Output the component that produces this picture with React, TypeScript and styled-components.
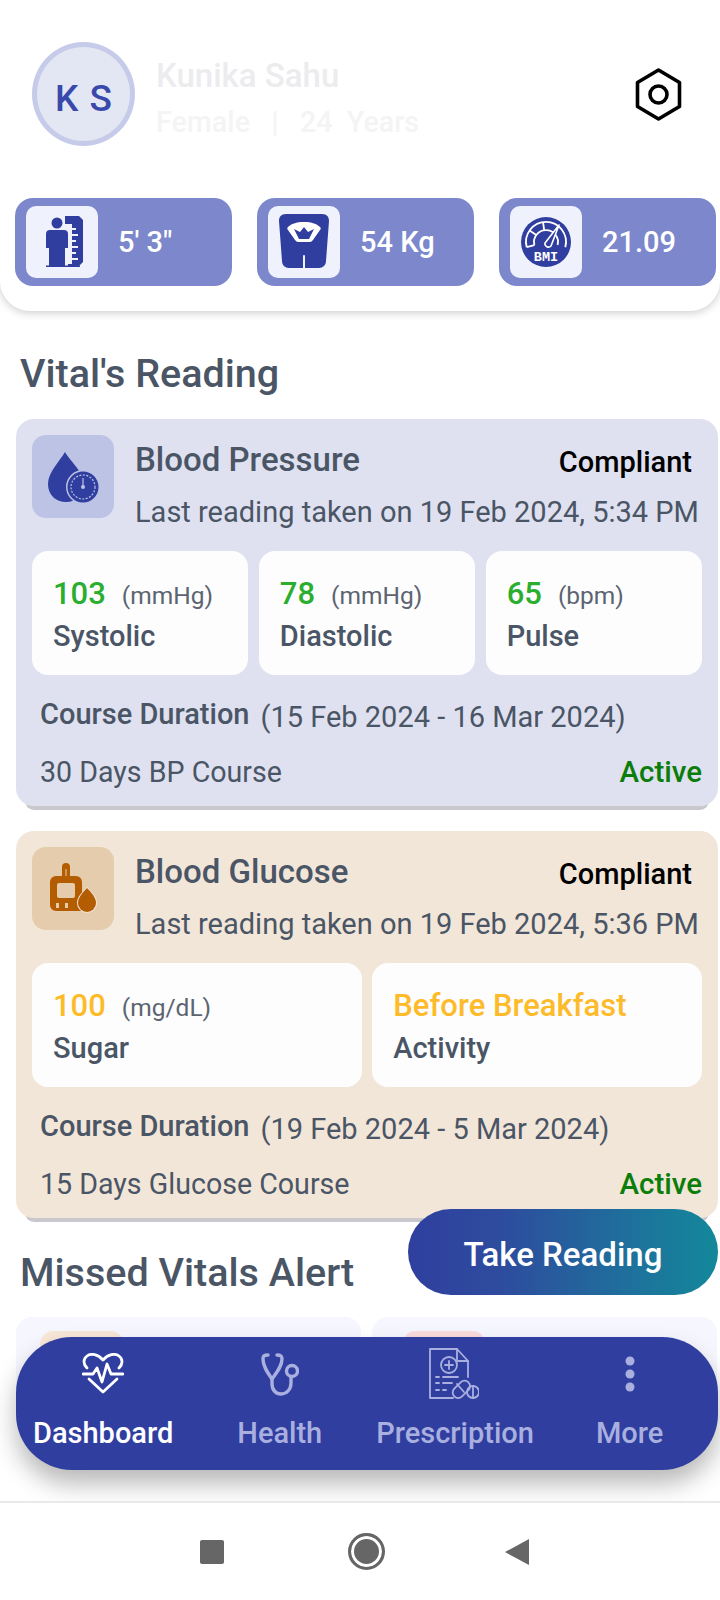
import React from "react";
import styled, { createGlobalStyle } from "styled-components";

const GlobalStyle = createGlobalStyle`
  html, body {
    margin: 0;
    padding: 0;
    background: #fff;
  }
  * {
    box-sizing: border-box;
  }
`;

const Screen = styled.div`
  width: 720px;
  height: 1600px;
  display: flex;
  flex-direction: column;
  overflow: hidden;
  background: #fff;
  font-family: Roboto, "Liberation Sans", sans-serif;
  color: #4a5565;
`;

const Content = styled.div`
  position: relative;
  flex: 1;
  overflow: hidden;
`;

const Header = styled.header`
  height: 311px;
  padding: 42px 0 0;
  background: #fff;
  border-radius: 0 0 30px 30px;
  box-shadow: 0 2px 8px rgba(0, 0, 0, 0.2);
`;

const Profile = styled.div`
  display: flex;
  align-items: center;
  padding: 0 38px 0 32px;
`;

const Avatar = styled.div`
  width: 103px;
  height: 104px;
  border-radius: 50%;
  flex: none;
  display: flex;
  align-items: center;
  justify-content: center;
  padding-top: 8px;
  background: #e3e6f3;
  border: 5px solid #c6cbe9;
  color: #3949ab;
  font-size: 37px;
  font-weight: 500;
  word-spacing: 2px;
`;

const ProfileText = styled.div`
  flex: 1;
  margin-left: 21px;
  padding-top: 10px;
`;

const Name = styled.div`
  font-size: 33px;
  line-height: 40px;
  font-weight: 500;
  color: #ececee;
`;

const Meta = styled.div`
  margin-top: 6px;
  font-size: 28.7px;
  line-height: 40px;
  font-weight: 500;
  color: #f4f4f5;
  white-space: pre;
`;

const StatRow = styled.div`
  display: flex;
  gap: 25px;
  margin-top: 52px;
  padding-left: 15px;
`;

const StatPill = styled.div`
  width: 217px;
  height: 88px;
  display: flex;
  align-items: center;
  gap: 20px;
  padding-left: 11px;
  border-radius: 18px;
  background: #7c87cc;
  color: #fff;
  font-size: 29px;
  font-weight: 500;
`;

const StatIcon = styled.div`
  width: 72px;
  height: 72px;
  flex: none;
  border-radius: 10px;
  background: #eff2fd;
  svg {
    display: block;
  }
`;

const SectionTitle = styled.h2<{ $top: number }>`
  margin: ${(p) => p.$top}px 0 0 20px;
  font-size: 39.5px;
  line-height: 44px;
  font-weight: 500;
  color: #4a5565;
`;

const Card = styled.section<{ $bg: string; $top: number }>`
  width: 702px;
  height: 387px;
  margin: ${(p) => p.$top}px 0 0 16px;
  padding: 16px 16px 0;
  border-radius: 18px;
  background: ${(p) => p.$bg};
  box-shadow: 0 13px 0 -9px #c9c9cd;
`;

const CardHead = styled.div`
  display: flex;
  gap: 21px;
`;

const IconTile = styled.div<{ $bg: string }>`
  width: 82px;
  height: 83px;
  flex: none;
  border-radius: 14px;
  background: ${(p) => p.$bg};
  svg {
    display: block;
  }
`;

const HeadText = styled.div`
  flex: 1;
  min-width: 0;
  padding-top: 4px;
`;

const TitleRow = styled.div`
  display: flex;
  justify-content: space-between;
  align-items: center;
  height: 40px;
  padding-right: 10px;
`;

const CardTitle = styled.div`
  font-size: 33px;
  font-weight: 500;
  color: #4a5565;
`;

const Compliant = styled.div`
  font-size: 29px;
  font-weight: 500;
  color: #000;
  padding-top: 6px;
`;

const LastReading = styled.div`
  margin-top: 13px;
  font-size: 29px;
  line-height: 40px;
  white-space: nowrap;
  color: #4a5565;
`;

const Cells = styled.div<{ $count: number }>`
  display: grid;
  grid-template-columns: repeat(${(p) => p.$count}, 1fr);
  gap: 10.5px;
  margin-top: 19px;
`;

const Cell = styled.div`
  height: 124px;
  padding: 25px 0 0 21px;
  border-radius: 16px;
  background: #fdfdfe;
`;

const ValueLine = styled.div`
  display: flex;
  align-items: baseline;
  gap: 16px;
  height: 36px;
  line-height: 36px;
`;

const Value = styled.span<{ $color: string }>`
  font-size: 31px;
  font-weight: 500;
  color: ${(p) => p.$color};
`;

const Unit = styled.span`
  font-size: 24.5px;
  color: #5b6470;
`;

const CellLabel = styled.div`
  margin-top: 6px;
  font-size: 29px;
  line-height: 36px;
  font-weight: 500;
  color: #4a5565;
`;

const CourseLine = styled.div`
  display: flex;
  align-items: center;
  gap: 11px;
  height: 36px;
  margin-top: 21px;
  padding-left: 8px;
`;

const CourseLabel = styled.span`
  font-size: 29px;
  font-weight: 500;
`;

const CourseDates = styled.span`
  font-size: 29px;
  padding-top: 6px;
`;

const FootLine = styled.div`
  display: flex;
  justify-content: space-between;
  align-items: center;
  height: 36px;
  margin-top: 22px;
  padding-left: 8px;
  font-size: 28.6px;
`;

const ActiveTag = styled.span`
  font-size: 29.5px;
  font-weight: 500;
  color: #0a7d0a;
`;

const MissedRow = styled.div`
  display: grid;
  grid-template-columns: 345px 345px;
  gap: 11px;
  margin: 22px 0 0 16px;
`;

const MissedCard = styled.div`
  height: 100px;
  padding: 14px 0 0 24px;
  border-radius: 16px;
  background: #f5f6fe;
`;

const MissedTile = styled.div<{ $bg: string; $shift: number }>`
  width: 84px;
  height: 84px;
  margin-left: ${(p) => p.$shift}px;
  border-radius: 14px;
  background: ${(p) => p.$bg};
`;

const TakeReading = styled.button`
  position: absolute;
  left: 408px;
  top: 1209px;
  width: 310px;
  height: 86px;
  border: none;
  border-radius: 43px;
  padding: 4px 0 0;
  background: linear-gradient(90deg, #2f3f9e 0%, #2e4c9e 30%, #1f6f9c 70%, #13889a 100%);
  color: #fff;
  font-family: inherit;
  font-size: 33px;
  font-weight: 500;
`;

const BottomNav = styled.nav`
  position: absolute;
  left: 16px;
  top: 1337px;
  width: 702px;
  height: 133px;
  display: flex;
  padding-left: 17px;
  border-radius: 56px;
  background: #303e9f;
  box-shadow: 0 14px 24px rgba(0, 0, 0, 0.28);
`;

const NavItem = styled.div<{ $active?: boolean; $gap?: number }>`
  display: flex;
  flex-direction: column;
  align-items: center;
  margin-left: ${(p) => p.$gap ?? 0}px;
  color: ${(p) => (p.$active ? "#fff" : "#a9b0e0")};
  font-size: 29px;
  font-weight: 500;
  white-space: nowrap;
`;

const NavGlyph = styled.div<{ $top: number; $pull?: number }>`
  height: 78px;
  padding-top: ${(p) => p.$top}px;
  padding-right: ${(p) => p.$pull ?? 0}px;
  svg {
    display: block;
  }
`;

const NavLabel = styled.div`
  line-height: 36px;
`;

const SystemBar = styled.div`
  height: 99px;
  flex: none;
  display: flex;
  justify-content: center;
  align-items: center;
  gap: 124px;
  padding-left: 9px;
  background: #fff;
  border-top: 2px solid #e9e9eb;
`;

const SystemSquare = styled.div`
  width: 24px;
  height: 24px;
  border-radius: 2px;
  background: #666;
`;

const SystemCircle = styled.div`
  width: 37px;
  height: 37px;
  margin-right: -4px;
  border-radius: 50%;
  background: #666;
  border: 3px solid #666;
  box-shadow: inset 0 0 0 3px #fff;
`;

const NUT = "M23.5 2 L44.5 14.5 V38.5 L23.5 51 L2.5 38.5 V14.5 Z";

const HeightIcon = () => (
  <svg width="72" height="72" viewBox="0 0 72 72">
    <circle cx="31" cy="17" r="5.5" fill="#303e9f" />
    <path d="M24 24h14a4 4 0 0 1 4 4v14h-3v18h-16V42h-3V28a4 4 0 0 1 4-4z" fill="#303e9f" />
    <path
      d="M39 10h14l4 4v42l-4 4H42v-2h4v-4h6v-2h-6v-4h4v-2h-4v-4h6v-2h-6v-4h4v-2h-4v-4h6v-2h-6v-4h4v-2h-4v-4h-7z"
      fill="#303e9f"
    />
    <rect x="20" y="59.5" width="34" height="1.5" fill="#303e9f" />
  </svg>
);

const ScaleIcon = () => (
  <svg width="72" height="72" viewBox="0 0 72 72">
    <path
      d="M18 8h36c5 0 7 3 7 7l-3 40c0 4-3 7-7 7H37V50a1 1 0 0 0-2 0v12H21c-4 0-7-3-7-7l-3-40c0-4 2-7 7-7z"
      fill="#303e9f"
    />
    <path
      d="M36 16c8 0 13 2 16 5 1 1 1 2 0 3l-7 10c-1 1-2 2-3 2H30c-1 0-2-1-3-2l-7-10c-1-1-1-2 0-3 3-3 8-5 16-5z"
      fill="#fff"
    />
    <path d="M26 23l5 10h10l5-10-6 3-4-5-4 5z" fill="#303e9f" />
  </svg>
);

const BmiIcon = () => (
  <svg width="72" height="72" viewBox="0 0 72 72">
    <circle cx="36" cy="36" r="25" fill="#303e9f" />
    <g fill="none" stroke="#fff" strokeWidth="1.8" strokeLinejoin="round">
      <path d="M16.700 41.200A20 20 0 1 1 55.300 41.200" />
      <path d="M24.400 39.100A12 12 0 1 1 47.600 39.100" />
      <path d="M16.700 41.200L24.400 39.100M19.600 24.500L26.200 29.100M33 16.200L34.200 24.100" />
    </g>
    <path d="M49 19L41 40a3.500 3.500 0 0 1-6-3z" fill="#303e9f" stroke="#fff" strokeWidth="1.6" strokeLinejoin="round" />
    <text x="36" y="55" textAnchor="middle" fill="#fff" fontFamily="Liberation Mono, monospace" fontSize="13.5" fontWeight="700">
      BMI
    </text>
  </svg>
);

const PressureIcon = () => (
  <svg width="82" height="83" viewBox="0 0 82 83">
    <path d="M33 17c5 9 19 20 19 33 0 10-8 17-18 17S16 60 16 49c0-12 12-23 17-32z" fill="#303e9f" />
    <circle cx="51" cy="52" r="17" fill="#bcc3e4" />
    <circle cx="51" cy="52" r="15.5" fill="#303e9f" />
    <circle cx="51" cy="52" r="12" fill="none" stroke="#bcc3e4" strokeWidth="1.2" strokeDasharray="2 1.5" />
    <path d="M51 43v9" stroke="#bcc3e4" strokeWidth="1.2" />
    <circle cx="51" cy="52" r="2" fill="#bcc3e4" />
  </svg>
);

const GlucoseIcon = () => (
  <svg width="82" height="83" viewBox="0 0 82 83">
    <path d="M30 29V20a4 4 0 0 1 8 0v9z" fill="#b35c00" />
    <rect x="33.500" y="22" width="1" height="7" fill="#e5ccac" />
    <path
      fillRule="evenodd"
      d="M24 29h20a6 6 0 0 1 6 6v29H24a6 6 0 0 1-6-6V35a6 6 0 0 1 6-6zm3 7a2 2 0 0 0-2 2v11a2 2 0 0 0 2 2h14a2 2 0 0 0 2-2V38a2 2 0 0 0-2-2zm-3 20v5h3v-5zm9 0v5h3v-5z"
      fill="#b35c00"
    />
    <path d="M55 40c5 5 10 10 10 16a10 10 0 0 1-20 0c0-6 5-11 10-16z" fill="#f3e6d8" />
    <path d="M55 41c5 5 9 10 9 15a9 9 0 0 1-18 0c0-5 4-10 9-15z" fill="#b35c00" />
  </svg>
);

const HeartIcon = () => (
  <svg width="42" height="41" viewBox="0 0 42 41" fill="none" stroke="#fff" strokeWidth="2.8" strokeLinejoin="round" strokeLinecap="round">
    <path d="M5 15C1 11 1 6 5 3c4-3 11-2 16 4 5-6 12-7 16-4 4 3 4 8 0 12" />
    <path d="M1 21h10l4-6 5 14 5-18 4 10h12" />
    <path d="M7 26l14 13 14-13" />
  </svg>
);

const StethoscopeIcon = () => (
  <svg width="39" height="43" viewBox="0 0 39 43" fill="none" stroke="#a9b0e0" strokeWidth="3.4" strokeLinecap="round">
    <path d="M8 2C4 2 3 3 3 6c0 7 4 13 9 20 5-7 10-13 10-20 0-3-1-4-5-4" />
    <path d="M12 26v5c0 6 4 10 9 10 6 0 10-5 10-11v-6" />
    <circle cx="32" cy="18" r="5.500" />
  </svg>
);

const PrescriptionIcon = () => (
  <svg width="50" height="52" viewBox="0 0 50 52" fill="none" stroke="#a9b0e0" strokeWidth="1.8" strokeLinecap="round" strokeLinejoin="round">
    <path d="M24 50H1V1h27l11 12v16" />
    <path d="M28 1v12h11" />
    <circle cx="20" cy="17" r="8" />
    <path d="M20 13v8M16 17h8" />
    <path d="M7 29h3M14 29h15M7 35h3M14 35h9M7 42h3M14 42h3" />
    <rect x="22" y="36" width="20" height="11" rx="5.500" transform="rotate(-45 32 41)" />
    <path d="M28 36l7 8" />
    <circle cx="44" cy="44" r="6" />
    <path d="M44 38v12" />
  </svg>
);

const MoreIcon = () => (
  <svg width="10" height="36" viewBox="0 0 10 36" fill="#a9b0e0">
    <circle cx="5" cy="5" r="4.500" />
    <circle cx="5" cy="18" r="4.500" />
    <circle cx="5" cy="31" r="4.500" />
  </svg>
);

const BackIcon = () => (
  <svg width="24" height="28" viewBox="0 0 24 28">
    <path d="M24 1v26L0 14z" fill="#666" />
  </svg>
);

const GREEN = "#2bae2f";
const AMBER = "#fdbb2a";

const App = () => {
  return (
    <Screen>
      <GlobalStyle />
      <Content>
        <Header>
          <Profile>
            <Avatar>K S</Avatar>
            <ProfileText>
              <Name>Kunika Sahu</Name>
              <Meta>{"Female   |   24  Years"}</Meta>
            </ProfileText>
            <svg width="47" height="53" viewBox="0 0 47 53" fill="none" stroke="#000" strokeWidth="3.6" strokeLinejoin="round">
              <path d={NUT} />
              <circle cx="23.5" cy="26.5" r="8.5" />
            </svg>
          </Profile>
          <StatRow>
            <StatPill>
              <StatIcon>
                <HeightIcon />
              </StatIcon>
              5' 3"
            </StatPill>
            <StatPill>
              <StatIcon>
                <ScaleIcon />
              </StatIcon>
              54 Kg
            </StatPill>
            <StatPill>
              <StatIcon>
                <BmiIcon />
              </StatIcon>
              21.09
            </StatPill>
          </StatRow>
        </Header>

        <SectionTitle $top={41}>Vital's Reading</SectionTitle>

        <Card $bg="#dfe1f0" $top={23}>
          <CardHead>
            <IconTile $bg="#bcc3e4">
              <PressureIcon />
            </IconTile>
            <HeadText>
              <TitleRow>
                <CardTitle>Blood Pressure</CardTitle>
                <Compliant>Compliant</Compliant>
              </TitleRow>
              <LastReading>Last reading taken on 19 Feb 2024, 5:34 PM</LastReading>
            </HeadText>
          </CardHead>
          <Cells $count={3}>
            <Cell>
              <ValueLine>
                <Value $color={GREEN}>103</Value>
                <Unit>(mmHg)</Unit>
              </ValueLine>
              <CellLabel>Systolic</CellLabel>
            </Cell>
            <Cell>
              <ValueLine>
                <Value $color={GREEN}>78</Value>
                <Unit>(mmHg)</Unit>
              </ValueLine>
              <CellLabel>Diastolic</CellLabel>
            </Cell>
            <Cell>
              <ValueLine>
                <Value $color={GREEN}>65</Value>
                <Unit>(bpm)</Unit>
              </ValueLine>
              <CellLabel>Pulse</CellLabel>
            </Cell>
          </Cells>
          <CourseLine>
            <CourseLabel>Course Duration</CourseLabel>
            <CourseDates>(15 Feb 2024 - 16 Mar 2024)</CourseDates>
          </CourseLine>
          <FootLine>
            <span>30 Days BP Course</span>
            <ActiveTag>Active</ActiveTag>
          </FootLine>
        </Card>

        <Card $bg="#f2e6d9" $top={25}>
          <CardHead>
            <IconTile $bg="#e5ccac">
              <GlucoseIcon />
            </IconTile>
            <HeadText>
              <TitleRow>
                <CardTitle>Blood Glucose</CardTitle>
                <Compliant>Compliant</Compliant>
              </TitleRow>
              <LastReading>Last reading taken on 19 Feb 2024, 5:36 PM</LastReading>
            </HeadText>
          </CardHead>
          <Cells $count={2}>
            <Cell>
              <ValueLine>
                <Value $color={AMBER}>100</Value>
                <Unit>(mg/dL)</Unit>
              </ValueLine>
              <CellLabel>Sugar</CellLabel>
            </Cell>
            <Cell>
              <ValueLine>
                <Value $color={AMBER}>Before Breakfast</Value>
              </ValueLine>
              <CellLabel>Activity</CellLabel>
            </Cell>
          </Cells>
          <CourseLine>
            <CourseLabel>Course Duration</CourseLabel>
            <CourseDates>(19 Feb 2024 - 5 Mar 2024)</CourseDates>
          </CourseLine>
          <FootLine>
            <span>15 Days Glucose Course</span>
            <ActiveTag>Active</ActiveTag>
          </FootLine>
        </Card>

        <SectionTitle $top={33}>Missed Vitals Alert</SectionTitle>

        <MissedRow>
          <MissedCard>
            <MissedTile $bg="#f8e6d6" $shift={0} />
          </MissedCard>
          <MissedCard>
            <MissedTile $bg="#fbdcdc" $shift={6} />
          </MissedCard>
        </MissedRow>

        <TakeReading>Take Reading</TakeReading>

        <BottomNav>
          <NavItem $active>
            <NavGlyph $top={16}>
              <HeartIcon />
            </NavGlyph>
            <NavLabel>Dashboard</NavLabel>
          </NavItem>
          <NavItem $gap={64}>
            <NavGlyph $top={16}>
              <StethoscopeIcon />
            </NavGlyph>
            <NavLabel>Health</NavLabel>
          </NavItem>
          <NavItem $gap={54}>
            <NavGlyph $top={11} $pull={2}>
              <PrescriptionIcon />
            </NavGlyph>
            <NavLabel>Prescription</NavLabel>
          </NavItem>
          <NavItem $gap={62}>
            <NavGlyph $top={19}>
              <MoreIcon />
            </NavGlyph>
            <NavLabel>More</NavLabel>
          </NavItem>
        </BottomNav>
      </Content>
      <SystemBar>
        <SystemSquare />
        <SystemCircle />
        <BackIcon />
      </SystemBar>
    </Screen>
  );
};

export default App;
